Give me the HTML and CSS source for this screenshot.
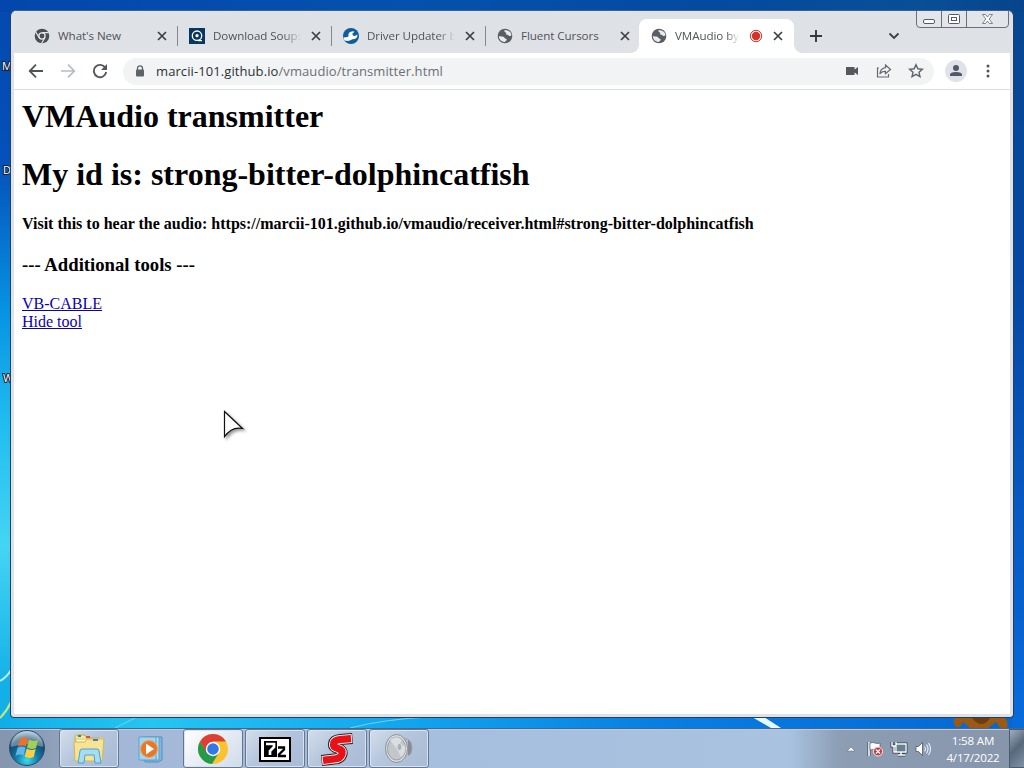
FILE: index.html
```html
<!DOCTYPE html>
<html lang="en">
<head>
<meta charset="utf-8">
<title>VMAudio by Marcii</title>
<link rel="stylesheet" href="styles.css">
</head>
<body>
<svg class="defs" width="0" height="0">
  <defs>
    <symbol id="close" viewBox="0 0 10 10"><path d="M1 1l8 8M9 1l-8 8" stroke="#3c4043" stroke-width="1.7" fill="none"/></symbol>
    <symbol id="globe" viewBox="0 0 16 16"><circle cx="8" cy="8" r="7.3" fill="#5a5d61"/><path d="M7.300 2.300c2-.4 4.300.3 5.700 1.700 1 .9 1.400 2.200 1.300 3.600-.9.7-1.900.3-2.700-.2-.8-.6-1.500-.2-2.300-.8-.5-.8.2-1.500-.3-2-.6-.5-1.900-.6-1.700-2.300zM1.800 8.300c1.700.2 3.500-.1 4.900.8.9.6 1.100 1.500 2.200 1.600 1 .2 1 1.300.3 2-.6.6-1.200 1.300-2.200 1.300-2.800-.4-4.900-2.500-5.200-5.700z" fill="#e9ebed"/></symbol>
  </defs>
</svg>
<div class="desktop">
  <svg class="wallpaper" width="1024" height="768">
    <defs><linearGradient id="left-sky" x2="0" y2="1"><stop offset="0" stop-color="#0349b0"/><stop offset=".22" stop-color="#0550ba"/><stop offset=".43" stop-color="#0793e3"/><stop offset=".58" stop-color="#20bcef"/><stop offset=".75" stop-color="#45d4f3"/><stop offset=".94" stop-color="#13b0e7"/></linearGradient>
    <linearGradient id="right-sky" x2="0" y2="1"><stop offset="0" stop-color="#07478f"/><stop offset=".4" stop-color="#0548a5"/><stop offset="1" stop-color="#086bdc"/></linearGradient>
    <linearGradient id="low-sky"><stop offset="0" stop-color="#10aee8"/><stop offset=".15" stop-color="#24c5f2"/><stop offset=".4" stop-color="#12a5ee"/><stop offset=".65" stop-color="#087fe2"/><stop offset="1" stop-color="#0567d4"/></linearGradient>
    <linearGradient id="top-sky"><stop offset="0" stop-color="#0347ad"/><stop offset=".4" stop-color="#0452ad"/><stop offset=".7" stop-color="#044a9f"/><stop offset=".9" stop-color="#094f96"/><stop offset="1" stop-color="#07448b"/></linearGradient></defs>
    <rect width="20" height="728" fill="url(#left-sky)"/>
    <rect x="1000" width="24" height="728" fill="url(#right-sky)"/>
    <rect width="1024" height="12" fill="url(#top-sky)"/>
    <rect y="712" width="1012" height="16" fill="url(#low-sky)"/>
    <path d="M0 681Q7 677 11 670" stroke="#baf1ff" stroke-width="2" fill="none"/>
    <path d="M0 718Q7 711 11 702" stroke="#bde889" stroke-width="2" fill="none"/>
    <path d="M350 728Q385 719 430 717M115 728L137 717" stroke="#6dd6f6" fill="none"/>
    <path d="M752 717h12l17 11h-10z" fill="#e8f8ff"/>
    <path d="M955 718h50q4 5 2 10h-7l-4-6-8 6h-18l-7-6-3 5h-4q-4-5-1-9z" fill="#9a5a13"/><path d="M972 718q10 12 18 0z" fill="#6d3d10"/>
    <g class="desk-label"><text x="2" y="70">My</text><text x="3" y="174">Di</text><text x="3" y="382">Wi</text></g>
  </svg>
  <main class="window">
    <div class="tabstrip">
      <div class="tab">
        <svg class="favicon" viewBox="0 0 16 16"><circle cx="8" cy="8" r="7.3" fill="#4b4e52"/><circle cx="8" cy="8" r="3.100" fill="#4b4e52" stroke="#e3e6ea" stroke-width="1.300"/><path d="M8 4.700h6.700M5.100 9.700L1.800 4M10.900 9.700L7.600 15.200" stroke="#e3e6ea" stroke-width="1.200"/></svg>
        <span class="title">What's New</span><svg class="close"><use href="#close"/></svg>
      </div>
      <div class="tab second">
        <svg class="favicon" viewBox="0 0 16 16"><path fill="#08365f" d="M0 0h16v16H0z"/><circle cx="8" cy="7.700" r="4.700" fill="none" stroke="#fff" stroke-width="1.300"/><circle cx="8" cy="7.700" r="1.600" fill="#fff"/><path d="M9 12.600h4" stroke="#fff" stroke-width="1.300"/></svg>
        <span class="title fade">Download Soups</span><svg class="close"><use href="#close"/></svg>
      </div>
      <div class="tab third">
        <svg class="favicon" viewBox="0 0 16 16"><circle cx="8" cy="8" r="8" fill="#0d5d9f"/><path d="M.5 9.500q3 0 5-1Q4.500 3.500 10 3.200l1.600.5L9.400 5.500l.4 2 2.200.5 2.400-1.500q.5 4.500-5 4.800-4 3-8 1z" fill="#fff"/></svg>
        <span class="title fade">Driver Updater b</span><svg class="close"><use href="#close"/></svg>
      </div>
      <div class="tab last">
        <svg class="favicon"><use href="#globe"/></svg>
        <span class="title">Fluent Cursors</span><svg class="close"><use href="#close"/></svg>
      </div>
      <div class="tab active">
        <svg class="favicon"><use href="#globe"/></svg>
        <span class="title fade">VMAudio by</span>
        <svg class="record" viewBox="0 0 14 14"><circle cx="7" cy="7" r="5.700" fill="#fff" stroke="#d93025" stroke-width="1"/><circle cx="7" cy="7" r="4.200" fill="#d93025"/></svg>
        <svg class="close"><use href="#close"/></svg>
      </div>
      <svg class="plus" viewBox="0 0 12 12"><path d="M6 0v12M0 6h12" stroke="#35383b" stroke-width="1.900"/></svg>
      <svg class="chevron" viewBox="0 0 12 8"><path d="M1.500 1.500L6 6l4.500-4.500" fill="none" stroke="#3c4043" stroke-width="1.800"/></svg>
      <svg class="caption" viewBox="0 0 94 18"><path d="M.5 0v13q0 3.500 3.500 3.500h85q3.500 0 3.500-3.500V0M25.500 0v16.500M50.500 0v16.500" fill="#e2e5e9" stroke="#6b7078"/><rect x="7.500" y="8.500" width="11" height="4" rx="1.500" fill="#fff" stroke="#555b65"/><rect x="32.500" y="3.500" width="11" height="9" rx="1" fill="#fff" stroke="#555b65"/><rect x="35.500" y="6.500" width="5" height="3" fill="#fff" stroke="#555b65"/><path d="M66.500 3.500h3l2 2.500 2-2.500h3l-3.300 4.500 3.300 4.500h-3l-2-2.500-2 2.500h-3l3.300-4.500z" fill="#fff" stroke="#626872" stroke-width=".8"/></svg>
    </div>
    <div class="toolbar">
      <svg class="nav" viewBox="0 0 16 16"><path d="M15 8H2M8 1.700L1.700 8 8 14.300" fill="none" stroke="#505357" stroke-width="1.800"/></svg>
      <svg class="nav" viewBox="0 0 16 16"><path d="M1 8h13M8 1.700L14.300 8 8 14.300" fill="none" stroke="#b9bcbf" stroke-width="1.700"/></svg>
      <svg class="nav" viewBox="0 0 16 16"><path d="M13.300 4.700A6.200 6.200 0 1 0 14.200 9" fill="none" stroke="#55585c" stroke-width="1.900"/><path d="M15 1v6H9z" fill="#55585c"/></svg>
      <div class="omnibox">
        <svg class="lock" viewBox="0 0 10 12"><path d="M2.500 5V3.300a2.500 2.500 0 0 1 5 0V5" fill="none" stroke="#5f6368" stroke-width="1.300"/><rect x="1" y="4.500" width="8" height="7" rx="1" fill="#5f6368"/></svg>
        <span class="url">marcii-101.github.io<i>/vmaudio/transmitter.html</i></span>
        <svg class="camera" viewBox="0 0 14 10"><path d="M1 1h8.500v2.500L13 1v8L9.500 6.500V9H1z" fill="#55585c"/></svg>
        <svg class="share" viewBox="0 0 16 16"><path d="M3 5H1.500v9h11v-3M9.500 2l5 4.500-5 4.300V8.300C6.500 8.100 5 9.100 3.800 11c.4-3.600 2.300-6 5.700-6.400z" fill="none" stroke="#66696d" stroke-width="1.200"/></svg>
        <svg class="star" viewBox="0 0 16 16"><path d="M8 1.700l1.900 4.100 4.500.5-3.400 3 1 4.400L8 11.400l-4 2.300 1-4.400-3.400-3 4.500-.5z" fill="none" stroke="#5f6368" stroke-width="1.400"/></svg>
      </div>
      <svg class="profile" viewBox="0 0 22 22"><circle cx="11" cy="11" r="11" fill="#dfe2e8"/><circle cx="11" cy="8" r="3" fill="#515966"/><path d="M5 16v-1.500q0-2.500 6-2.500t6 2.500V16z" fill="#515966"/></svg>
      <svg class="dots" viewBox="0 0 4 14"><circle cx="2" cy="2" r="1.500"/><circle cx="2" cy="7" r="1.500"/><circle cx="2" cy="12" r="1.500"/></svg>
    </div>
    <div class="page">
      <h1>VMAudio transmitter</h1>
      <h1>My id is: strong-bitter-dolphincatfish</h1>
      <h4>Visit this to hear the audio: https://marcii-101.github.io/vmaudio/receiver.html#strong-bitter-dolphincatfish</h4>
      <h3>--- Additional tools ---</h3>
      <a href="#cable">VB-CABLE</a><br><a href="#hide">Hide tool</a>
    </div>
  </main>
  <footer class="taskbar">
    <svg class="orb" viewBox="0 0 38 38"><defs><radialGradient id="orb" cx=".5" cy=".85" r=".8"><stop offset="0" stop-color="#3ddcf2"/><stop offset=".4" stop-color="#107aa8"/><stop offset=".75" stop-color="#164969"/><stop offset="1" stop-color="#9fb9cb"/></radialGradient></defs><circle cx="19" cy="19" r="17.500" fill="url(#orb)" stroke="#274c69"/><path d="M3 18a16 16 0 0 1 32 0Q19 12 3 18z" fill="#d9e7ef" opacity=".4"/><path d="M12 10q4-3 8-.5l-2 8q-4-2-8 .5z" fill="#ef6f2c"/><path d="M21 10.500q4 2.500 9 .5l-2 8q-5 2-9-.5z" fill="#a5cf52"/><path d="M9.500 19q4-2.500 8-.5l-2 8q-4-2-8 .5z" fill="#60b7ec"/><path d="M18.700 19.500q4 2.500 9 .5l-2 8q-5 2-9-.5z" fill="#fbce43"/></svg>
    <div class="task framed first"><svg width="34" height="34" viewBox="0 0 34 34"><path d="M3 9V5q0-2 2-2h8l2 3h14v4z" fill="#f5e5a0" stroke="#c1a75d"/><path d="M4 7h24v-2l2 1v20H4z" fill="#fff5c5" stroke="#d9c57d"/><path d="M2 10h11l2-3h17l-2 22H3z" fill="#f7e392" stroke="#d0b85f"/><path d="M6 4h3" stroke="#299b46" stroke-width="2"/><path d="M14 5h4" stroke="#d45537" stroke-width="2"/><path d="M21 8h5" stroke="#3c83bd" stroke-width="2"/><path d="M6 31l2-12q0-2 2-2h15q2 0 2 2l2 12h-6l-1-8h-9l-1 8z" fill="#a6dcf4" stroke="#4aa2ce"/></svg></div>
    <div class="task player"><svg width="30" height="30" viewBox="0 0 30 30"><path d="M9 3h17v23l-4 2H9z" fill="#84b5d8" stroke="#4d92c2"/><path d="M6 3h17v23H6z" fill="#b6daee" stroke="#58a4ce"/><path d="M3 3h17v23H3z" fill="#a7d3ec" stroke="#56a7d1"/><circle cx="13" cy="15" r="8.500" fill="#e77828" stroke="#f3a467"/><path d="M10 9.500v11l8-5.500z" fill="#fff"/></svg></div>
    <div class="task framed current"><svg width="32" height="32" viewBox="0 0 32 32"><circle cx="16" cy="16" r="15" fill="#fbc42d"/><path d="M3 8.500A15 15 0 0 0 15 31L22 19.500H10z" fill="#249b48"/><path d="M3 8.500A15 15 0 0 1 29 8.500H16L10 20z" fill="#dc4034"/><circle cx="16" cy="16" r="7.200" fill="#fff"/><circle cx="16" cy="16" r="5.800" fill="#3478e5"/></svg></div>
    <div class="task framed"><svg width="34" height="28" viewBox="0 0 34 28"><path d="M1 2h32v25H1z" fill="#000"/><path d="M3 4h28v21H3z" fill="#fff"/><path d="M6 6h13v16H6z"/><path d="M8 9h8v3l-4 4v4" stroke="#fff" stroke-width="2.700" fill="none"/><path d="M20 12.500h6v2l-5 5v1.500h7" stroke="#000" stroke-width="2.300" fill="none"/></svg></div>
    <div class="task framed"><svg width="34" height="34" viewBox="0 0 34 34"><g fill="none"><path d="M32.500 6.500L20 7.500Q14 8 13.500 12Q13 15 18 16.500Q23 18 22 22Q20.500 27 14 27L1.500 28.500" stroke="#252226" stroke-width="11"/><path d="M32 6.500L20 7.500Q14 8 13.500 12Q13 15 18 16.500Q23 18 22 22Q20.500 27 14 27L2 28.500" stroke="#f6eeee" stroke-width="9"/><path d="M31 6.600L20 7.500Q14 8 13.500 12Q13 15 18 16.500Q23 18 22 22Q20.500 27 14 27L3 28.400" stroke="#e81118" stroke-width="7.200"/></g></svg></div>
    <div class="task framed"><svg width="32" height="32" viewBox="0 0 32 32"><path d="M15 3l9 3q5 2 5 9t-5 8l-9 4z" fill="#858c97" stroke="#9da4af"/><path d="M21 5l4 2v16l-4 2" fill="#b8bec8"/><ellipse cx="13.500" cy="15.500" rx="11" ry="14" fill="#dadde0" stroke="#888e96"/><ellipse cx="13.500" cy="15.500" rx="9" ry="11.500" fill="#c3c7cb" stroke="#989fa6"/><path d="M13 15L7 7q7-6 12 0zM14 16l8-4q2 8-4 12z" fill="#e9ecee" opacity=".6"/><ellipse cx="16.500" cy="14" rx="2.500" ry="3.500" fill="#a9afb6" stroke="#e1e2e3"/></svg></div>
    <div class="tray">
      <svg class="up" viewBox="0 0 10 6"><path d="M1 5l4-4 4 4z" fill="#fff" stroke="#66788c" stroke-width=".6"/></svg>
      <svg width="18" height="18" viewBox="0 0 18 18"><path d="M3 2v14" stroke="#3b4654" stroke-width="3"/><path d="M3 2v14" stroke="#fff" stroke-width="1.600"/><path d="M4 3q3-1 5 0t5 0v7q-3 1-5 0t-5 0z" fill="#fff" stroke="#4c5968" stroke-width=".7"/><circle cx="12" cy="11.500" r="4.500" fill="#c9373c" stroke="#eee"/><path d="M10 9.500l4 4M14 9.500l-4 4" stroke="#fff" stroke-width="1.300"/></svg>
      <svg width="18" height="18" viewBox="0 0 18 18"><path d="M6 4h10v8H6zM11 12v3M8 15h7M2 2v4h4V2M4 6v6h2" fill="none" stroke="#394553" stroke-width="3"/><path d="M6 4h10v8H6zM11 12v3M8 15h7M2 2v4h4V2M4 6v6h2" fill="none" stroke="#fff" stroke-width="1.400"/><path d="M7 5h8v6H7z" fill="#687e92"/></svg>
      <svg width="18" height="18" viewBox="0 0 18 18"><path d="M2 6.500h2.500l4-4v13l-4-4H2z" fill="#fff" stroke="#4c5968" stroke-width=".8"/><path d="M10.500 6.500q2 2.500 0 5M12.500 4.500q3 4.500 0 9M14.500 3q4 6 0 12" fill="none" stroke="#e9f1f8" stroke-width="1.100"/></svg>
      <div class="clock"><div class="time">1:58 AM</div><div class="date">4/17/2022</div></div>
      <div class="show-desktop"></div>
    </div>
  </footer>
  <svg class="cursor" viewBox="0 0 30 36"><path d="M4.500 1.500v25.200Q12 16 22.500 18.500z" fill="#fff" stroke="#111" stroke-width="1.200"/></svg>
</div>
</body>
</html>
```
FILE: styles.css
```css
* { box-sizing: border-box; }
body { margin: 0; overflow: hidden; }
svg { display: block; flex: none; }
.defs { position: absolute; }
.desktop { position: relative; width: 1024px; height: 768px; display: flex; flex-direction: column; justify-content: space-between; padding-top: 10px; font-family: "Open Sans", "Noto Sans", sans-serif; }
.wallpaper { position: absolute; left: 0; top: 0; }
.desk-label { font-size: 11px; fill: #fff; stroke: #123; stroke-width: 2px; paint-order: stroke; }
.window { position: relative; width: 1004px; height: 708px; margin-left: 10px; display: flex; flex-direction: column; padding: 0 3px 3px; border: 1px solid #263f5c; border-top-color: #3c6087; border-radius: 6px 6px 4px 4px; background: #dde1ea; }
.tabstrip { position: relative; height: 42px; flex: none; display: flex; align-items: center; padding: 8px 0 0 10px; background: #dee1e6; }
.tab { position: relative; width: 154px; height: 34px; flex: none; display: flex; align-items: center; padding: 0 11px 0 10px; }
.tab:not(.last):not(.active)::after { content: ""; position: absolute; right: 0; top: 7px; width: 1px; height: 20px; background: #85898e; }
.favicon { width: 16px; height: 16px; margin-right: 8px; }
.title { width: 90px; margin-right: 9px; font-size: 11.6px; line-height: 18px; letter-spacing: -.08px; color: #505357; white-space: nowrap; }
.second, .third, .last { padding-left: 11px; padding-right: 10px; }
.fade { -webkit-mask-image: linear-gradient(90deg, #000 78%, transparent 98%); mask-image: linear-gradient(90deg, #000 78%, transparent 98%); }
.second .title, .third .title, .last .title { margin-right: 8px; }
.tab .close { width: 10px; height: 10px; }
.last { width: 153px; padding-right: 8px; }
.last .title { margin-right: 9px; }
.active { width: 155px; background: #fff; border-radius: 8px 8px 0 0; padding-left: 12px; }
.active::before, .active::after { content: ""; position: absolute; bottom: 0; width: 8px; height: 8px; }
.active::before { left: -8px; background: radial-gradient(circle at 0 0, transparent 7.5px, #fff 8px); }
.active::after { right: -8px; background: radial-gradient(circle at 100% 0, transparent 7.5px, #fff 8px); }
.active .title { width: 66px; margin-right: 8px; }
.record { width: 14px; height: 14px; margin-right: 10px; }
.plus { width: 12px; height: 12px; margin-left: 16px; }
.chevron { width: 12px; height: 8px; margin-left: 66px; }
.caption { position: absolute; right: 0; top: 0; width: 94px; height: 18px; }
.toolbar { height: 37px; flex: none; display: flex; align-items: center; padding-left: 14px; background: #fff; border-bottom: 1px solid #dadce0; }
.nav { width: 16px; height: 16px; margin-right: 16px; }
.omnibox { width: 811px; height: 27px; margin-left: -1px; margin-right: 11px; display: flex; align-items: center; padding: 0 10px 0 12px; border-radius: 14px; background: #f1f3f4; }
.lock { width: 10px; height: 12px; margin-right: 11px; }
.url { flex: 1; font-size: 13px; line-height: 20px; letter-spacing: .09px; white-space: nowrap; color: #2e3134; }
.url i { font-style: normal; color: #6b6f73; }
.camera { width: 14px; height: 10px; margin-right: 17px; }
.share, .star { width: 16px; height: 16px; }
.share { margin-right: 16px; }
.profile { width: 22px; height: 22px; }
.dots { width: 4px; height: 14px; margin-left: 19px; fill: #505357; }
.page { flex: 1; padding: 8px; background: #fff; font: 16px/18px "Liberation Serif", "Times New Roman", serif; color: #000; }
.page h1 { margin: 0 0 21.4px; font-size: 32px; line-height: 37px; }
.page h4 { margin: 0 0 21.3px; font-size: 16px; line-height: 18px; }
.page h3 { margin: 0 0 19px; font-size: 18.72px; line-height: 22px; }
.page a { color: #0a00b8; text-decoration: underline; }
.taskbar { position: relative; height: 40px; display: flex; border-top: 1px solid #45688a; padding-left: 8px; background: linear-gradient(90deg, #8495ad, #8d9fb9 50px, #a3b8d6 120px, #a6bfdf 430px, #a8c2df 790px, #8c9db4 840px, #8795aa); box-shadow: inset 0 1px #b6cbe1; }
.orb { width: 38px; height: 38px; }
.task { width: 62px; height: 39px; display: flex; align-items: center; justify-content: center; }
.task.first { margin-left: 13px; }
.player { padding-right: 3px; }
.framed { width: 60px; margin-right: 2px; border: 1px solid #65768d; border-radius: 3px; background: linear-gradient(135deg, #d4deea, #b4c5dc 45%, #a8bbd5); box-shadow: inset 0 0 0 1px #d8e3ef; }
.current { background: linear-gradient(135deg, #fff, #e4eaf3 55%, #cfdbea); }
.tray { margin-left: auto; display: flex; align-items: center; gap: 6px; color: #fff; }
.up { width: 10px; height: 6px; margin-right: 4px; }
.clock { width: 72px; margin-left: -1px; margin-right: -6px; text-align: center; font-size: 11.6px; line-height: 17px; letter-spacing: -.2px; white-space: nowrap; }
.show-desktop { width: 15px; height: 39px; border: 1px solid #4c5b6d; border-right: 0; background: linear-gradient(135deg, #a0adbc, #57687d 48%, #8391a3); }
.cursor { position: absolute; left: 220px; top: 410px; width: 30px; height: 36px; filter: drop-shadow(2px 2px 1.5px #0006); }
```
